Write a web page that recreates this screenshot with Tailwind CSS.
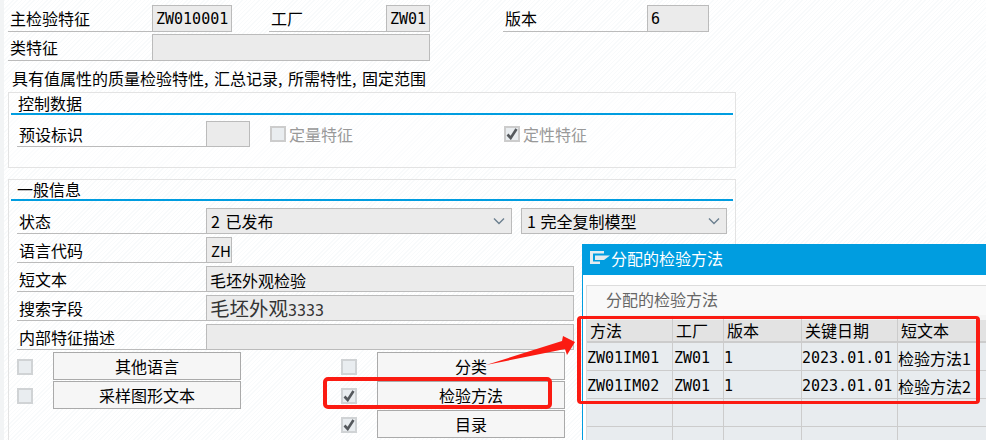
<!DOCTYPE html>
<html>
<head>
  <meta charset="utf-8">
  <title>主检验特征</title>
  <script src="https://cdn.jsdelivr.net/npm/@tailwindcss/browser@4"></script>
</head>
<body class="bg-white">
  <div class="relative w-[986px] h-[440px] overflow-hidden text-[16px] leading-[26px] text-black [font-family:'Noto_Sans_CJK_SC',sans-serif] bg-[repeating-linear-gradient(135deg,#f8fafb_0,#f8fafb_1px,#ffffff_1px,#ffffff_3px)]">
    <!-- Left strip -->
    <div class="absolute left-0 top-0 bottom-0 w-[4px] bg-[#f2f4f5]"></div>

    <div class="flex flex-col pl-[8px] pt-[5px]">
      <!-- Header fields -->
      <div class="flex h-[27px]">
        <div class="w-[144px] border-b border-[#bbbbbb] pl-[2px]">主检验特征</div>
        <div class="w-[80px] border border-[#bbbbbb] bg-[#ebebeb] pl-[3px] [font-family:'DejaVu_Sans_Mono',monospace] text-[15px]">ZW010001</div>
        <div class="w-[117px] ml-[37px] border-b border-[#bbbbbb] pl-[2px]">工厂</div>
        <div class="w-[44px] border border-[#bbbbbb] bg-[#ebebeb] pl-[3px] [font-family:'DejaVu_Sans_Mono',monospace] text-[15px]">ZW01</div>
        <div class="w-[144px] ml-[73px] border-b border-[#bbbbbb] pl-[2px]">版本</div>
        <div class="w-[62px] border border-[#bbbbbb] bg-[#ebebeb] pl-[3px] [font-family:'DejaVu_Sans_Mono',monospace] text-[15px]">6</div>
      </div>
      <div class="flex h-[27px] mt-[2px]">
        <div class="w-[144px] border-b border-[#bbbbbb] pl-[2px]">类特征</div>
        <div class="w-[278px] border border-[#bbbbbb] bg-[#ebebeb]"></div>
      </div>
      <div class="h-[26px] mt-[4px] pl-[4px] whitespace-nowrap [word-spacing:2px]">具有值属性的质量检验特性, 汇总记录, 所需特性, 固定范围</div>

      <!-- Control data -->
      <div class="w-[728px] h-[76px] mt-[1px] border border-[#e3e3e3] bg-[repeating-linear-gradient(135deg,#fbfcfd_0,#fbfcfd_1px,#ffffff_1px,#ffffff_3px)]">
        <div class="mx-[2px] h-[22px] border-b-2 border-[#009de0] pl-[7px] leading-[20px]">控制数据</div>
        <div class="flex h-[26px] mt-[6px] ml-[8px]">
          <div class="w-[189px] border-b border-[#bbbbbb] pl-[2px]">预设标识</div>
          <div class="w-[44px] border border-[#bbbbbb] bg-[#ebebeb]"></div>
          <label class="flex items-center ml-[20px] w-[234px] text-[#999999]">
            <span class="w-[16px] h-[16px] border-2 border-[#cccccc] bg-[#e9edf0]"></span>
            <span class="ml-[3px]">定量特征</span>
          </label>
          <label class="flex items-center text-[#999999]">
            <span class="w-[16px] h-[16px] border-2 border-[#cccccc] bg-[#e9edf0] flex items-center justify-center">
              <svg width="12" height="12" viewBox="0 0 12 12"><path d="M1.5 6.5l3.2 3.5L10.5 1" fill="none" stroke="#55595d" stroke-width="2.6"/></svg>
            </span>
            <span class="ml-[3px]">定性特征</span>
          </label>
        </div>
      </div>

      <!-- General info -->
      <div class="w-[728px] h-[270px] mt-[11px] border border-[#e3e3e3]">
        <div class="mx-[2px] h-[21px] border-b-2 border-[#009de0] pl-[6px] leading-[19px]">一般信息</div>
        <div class="flex flex-col gap-[3px] mt-[7px] ml-[8px]">
          <div class="flex h-[26px]">
            <div class="w-[189px] border-b border-[#bbbbbb] pl-[2px]">状态</div>
            <div class="w-[306px] border border-[#bbbbbb] bg-[#ebebeb] pl-[4px] pr-[6px] flex items-center justify-between">
              <span class="[word-spacing:2px]">2 已发布</span>
              <svg width="12" height="8" viewBox="0 0 12 8"><path d="M1 1.5l5 5 5-5" fill="none" stroke="#6b7f8f" stroke-width="1.4"/></svg>
            </div>
            <div class="w-[206px] ml-[9px] border border-[#bbbbbb] bg-[#ebebeb] pl-[5px] pr-[6px] flex items-center justify-between">
              <span class="[word-spacing:1px]">1 完全复制模型</span>
              <svg width="12" height="8" viewBox="0 0 12 8"><path d="M1 1.5l5 5 5-5" fill="none" stroke="#6b7f8f" stroke-width="1.4"/></svg>
            </div>
          </div>
          <div class="flex h-[26px]">
            <div class="w-[189px] border-b border-[#bbbbbb] pl-[2px]">语言代码</div>
            <div class="w-[26px] border border-[#bbbbbb] bg-[#ebebeb] pl-[4px] text-[15px]">ZH</div>
          </div>
          <div class="flex h-[26px]">
            <div class="w-[189px] border-b border-[#bbbbbb] pl-[2px]">短文本</div>
            <div class="w-[368px] border border-[#bbbbbb] bg-[#ebebeb] pl-[3px]">毛坯外观检验</div>
          </div>
          <div class="flex h-[26px]">
            <div class="w-[189px] border-b border-[#bbbbbb] pl-[2px]">搜索字段</div>
            <div class="w-[368px] border border-[#bbbbbb] bg-[#ebebeb] pl-[3px] text-[19.5px] leading-[24px] text-[#333333] whitespace-nowrap">毛坯外观<span class="[font-family:'DejaVu_Sans_Mono',monospace] text-[15px]">3333</span></div>
          </div>
          <div class="flex h-[26px]">
            <div class="w-[189px] border-b border-[#bbbbbb] pl-[2px] whitespace-nowrap">内部特征描述</div>
            <div class="w-[368px] border border-[#bbbbbb] bg-[#ebebeb]"></div>
          </div>
        </div>

        <!-- Buttons -->
        <div class="flex mt-[2px] ml-[8px]">
          <div class="flex flex-col gap-[1px] w-[36px]">
            <div class="h-[28px] pt-[2px] flex items-center"><span class="w-[16px] h-[16px] border-2 border-[#d0d3d5] bg-[#e9edf0]"></span></div>
            <div class="h-[28px] pt-[2px] flex items-center"><span class="w-[16px] h-[16px] border-2 border-[#d0d3d5] bg-[#e9edf0]"></span></div>
          </div>
          <div class="flex flex-col gap-[1px] w-[188px]">
            <button class="h-[28px] border border-[#aaaaaa] bg-[#f6f6f6] leading-none">其他语言</button>
            <button class="h-[28px] border border-[#aaaaaa] bg-[#f6f6f6] leading-none">采样图形文本</button>
          </div>
          <div class="flex flex-col gap-[1px] w-[36px] ml-[100px]">
            <div class="h-[28px] pt-[2px] flex items-center"><span class="w-[16px] h-[16px] border-2 border-[#d0d3d5] bg-[#e9edf0]"></span></div>
            <div class="h-[28px] pt-[2px] flex items-center">
              <span class="w-[16px] h-[16px] border-2 border-[#d0d3d5] bg-[#e9edf0] flex items-center justify-center">
                <svg width="12" height="12" viewBox="0 0 12 12"><path d="M1.5 6.5l3.2 3.5L10.5 1" fill="none" stroke="#55595d" stroke-width="2.6"/></svg>
              </span>
            </div>
            <div class="h-[28px] pt-[2px] flex items-center">
              <span class="w-[16px] h-[16px] border-2 border-[#d0d3d5] bg-[#e9edf0] flex items-center justify-center">
                <svg width="12" height="12" viewBox="0 0 12 12"><path d="M1.5 6.5l3.2 3.5L10.5 1" fill="none" stroke="#55595d" stroke-width="2.6"/></svg>
              </span>
            </div>
          </div>
          <div class="flex flex-col gap-[1px] w-[188px]">
            <button class="h-[28px] border border-[#aaaaaa] bg-[#f6f6f6] leading-none">分类</button>
            <button class="h-[28px] border border-[#aaaaaa] bg-[#f6f6f6] leading-none">检验方法</button>
            <button class="h-[28px] border border-[#aaaaaa] bg-[#f6f6f6] leading-none">目录</button>
          </div>
        </div>
      </div>
    </div>

    <!-- Popup dialog -->
    <div class="absolute left-[582px] top-[244px] w-[404px] h-[196px] bg-white border-l border-[#009de0]">
      <div class="h-[31px] -ml-px bg-[#009de0] flex items-center pl-[8px] pb-[3px] text-white">
        <svg width="20" height="14" viewBox="0 0 20 14" class="mr-[1px]"><path d="M0 0h14v2.5H3v8h7V13H0z" fill="#e3ebef"/><path d="M5 4.5h15l-6 4.5H5z" fill="#e3ebef"/></svg>
        <span>分配的检验方法</span>
      </div>
      <div class="ml-[3px] mt-[10px] h-[155px] border-l border-t border-[#dddddd] bg-[#f7f7f7]">
        <div class="h-[29px] pl-[19px] leading-[27px] text-[#666666] bg-[#f9f9f9]">分配的检验方法</div>
        <div class="grid grid-cols-[86px_51px_78px_96px_1fr] leading-[30px]">
          <div class="h-[28px] bg-[#e3e3e3] border-r border-b-2 border-t-[5px] border-r-[#cccccc] border-b-[#cccccc] border-t-[#f4f4f4] leading-[21px] pl-[3px]">方法</div>
          <div class="h-[28px] bg-[#e3e3e3] border-r border-b-2 border-t-[5px] border-r-[#cccccc] border-b-[#cccccc] border-t-[#f4f4f4] leading-[21px] pl-[3px]">工厂</div>
          <div class="h-[28px] bg-[#e3e3e3] border-r border-b-2 border-t-[5px] border-r-[#cccccc] border-b-[#cccccc] border-t-[#f4f4f4] leading-[21px] pl-[3px]">版本</div>
          <div class="h-[28px] bg-[#e3e3e3] border-r border-b-2 border-t-[5px] border-r-[#cccccc] border-b-[#cccccc] border-t-[#f4f4f4] leading-[21px] pl-[3px]">关键日期</div>
          <div class="h-[28px] bg-[#e3e3e3] border-b-2 border-t-[5px] border-b-[#cccccc] border-t-[#f4f4f4] leading-[21px] pl-[3px]">短文本</div>

          <div class="h-[28px] bg-[#e8ecef] border-r border-b border-[#cccccc] [font-family:'DejaVu_Sans_Mono',monospace] text-[15px]">ZW01IM01</div>
          <div class="h-[28px] bg-[#e8ecef] border-r border-b border-[#cccccc] [font-family:'DejaVu_Sans_Mono',monospace] text-[15px] pl-px">ZW01</div>
          <div class="h-[28px] bg-[#e8ecef] border-r border-b border-[#cccccc] [font-family:'DejaVu_Sans_Mono',monospace] text-[15px]">1</div>
          <div class="h-[28px] bg-[#e8ecef] border-r border-b border-[#cccccc] [font-family:'DejaVu_Sans_Mono',monospace] text-[15px] whitespace-nowrap">2023.01.01</div>
          <div class="h-[28px] bg-[#e8ecef] border-b border-[#cccccc] whitespace-nowrap">检验方法1</div>

          <div class="h-[28px] bg-[#e8ecef] border-r border-b border-[#cccccc] [font-family:'DejaVu_Sans_Mono',monospace] text-[15px]">ZW01IM02</div>
          <div class="h-[28px] bg-[#e8ecef] border-r border-b border-[#cccccc] [font-family:'DejaVu_Sans_Mono',monospace] text-[15px] pl-px">ZW01</div>
          <div class="h-[28px] bg-[#e8ecef] border-r border-b border-[#cccccc] [font-family:'DejaVu_Sans_Mono',monospace] text-[15px]">1</div>
          <div class="h-[28px] bg-[#e8ecef] border-r border-b border-[#cccccc] [font-family:'DejaVu_Sans_Mono',monospace] text-[15px] whitespace-nowrap">2023.01.01</div>
          <div class="h-[28px] bg-[#e8ecef] border-b border-[#cccccc] whitespace-nowrap">检验方法2</div>

          <div class="h-[28px] bg-[#e8ecef] border-r border-b border-[#cccccc]"></div>
          <div class="h-[28px] bg-[#e8ecef] border-r border-b border-[#cccccc]"></div>
          <div class="h-[28px] bg-[#e8ecef] border-r border-b border-[#cccccc]"></div>
          <div class="h-[28px] bg-[#e8ecef] border-r border-b border-[#cccccc]"></div>
          <div class="h-[28px] bg-[#e8ecef] border-b border-[#cccccc]"></div>

          <div class="h-[28px] bg-[#e8ecef] border-r border-[#cccccc]"></div>
          <div class="h-[28px] bg-[#e8ecef] border-r border-[#cccccc]"></div>
          <div class="h-[28px] bg-[#e8ecef] border-r border-[#cccccc]"></div>
          <div class="h-[28px] bg-[#e8ecef] border-r border-[#cccccc]"></div>
          <div class="h-[28px] bg-[#e8ecef]"></div>
        </div>
      </div>
    </div>

    <!-- Red annotations -->
    <div class="absolute left-[323px] top-[377px] w-[229px] h-[32px] border-4 border-[#fb1b12] rounded-[5px]"></div>
    <div class="absolute left-[577px] top-[316px] w-[403px] h-[88px] border-x-4 border-y-[3px] border-[#fb1b12] rounded-[4px]"></div>
    <svg class="absolute left-[480px] top-[330px]" width="100" height="40" viewBox="0 0 100 40"><path d="M6 35L82 11 83 6 95 12 87 25 85 19z" fill="#fb1b12"/></svg>
  </div>
</body>
</html>
